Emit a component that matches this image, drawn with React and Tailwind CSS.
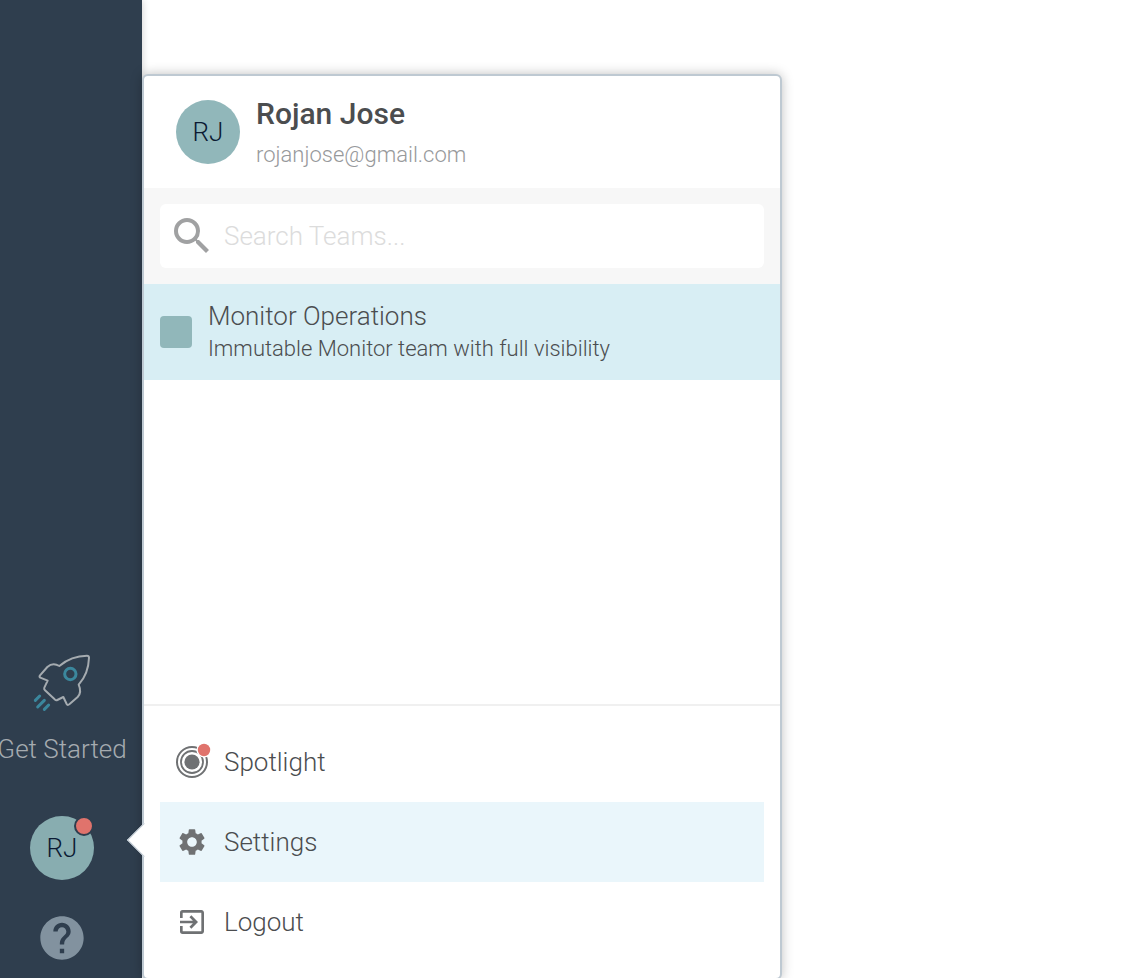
import React from 'react';
import { MdSearch, MdSettings, MdExitToApp, MdHelp } from 'react-icons/md';

function Rocket() {
  return (
    <svg viewBox="90 30 192 192" className="size-16" fill="none" strokeLinecap="round" strokeLinejoin="round" aria-hidden="true">
      <path
        d="M178 78 C200 59 232 47 261 47 Q267 47 267 53 C266 84 254 114 236 134 C243 150 241 163 233 171 L208 193 Q203 197 200 192 L190 171 L172 180 Q168 182 164 178 L135 151 Q131 147 133 143 L143 122 L121 113 Q117 110 120 106 L142 81 C153 71 166 71 178 78 Z"
        stroke="#a5abb0"
        strokeWidth="6"
      />
      <circle cx="211" cy="102" r="17" stroke="#3b879d" strokeWidth="9" />
      <path d="M106 181 L119 168 M113 201 L133 181 M133 208 L146 195" stroke="#3b879d" strokeWidth="9" />
    </svg>
  );
}

function SpotlightIcon() {
  return (
    <svg viewBox="0 0 36 36" className="size-9" fill="none" aria-hidden="true">
      <circle cx="16" cy="20" r="7.6" fill="#6f7173" />
      <circle cx="16" cy="20" r="11" stroke="#6f7173" strokeWidth="1.8" />
      <circle cx="16" cy="20" r="15" stroke="#6f7173" strokeWidth="2" />
      <circle cx="28" cy="8" r="7.6" fill="#fff" />
      <circle cx="28" cy="8" r="6.2" fill="#e0736c" />
    </svg>
  );
}

function Sidebar() {
  return (
    <nav className="flex w-[142px] shrink-0 flex-col items-center justify-end overflow-hidden bg-[#2f3e4e] pr-[18px] pb-[14px] shadow-[0_0_8px_rgba(0,0,0,0.2)]">
      <a href="#start" className="flex flex-col items-center gap-4 text-[26px] leading-[38px] font-light whitespace-nowrap text-[#a5abb0]">
        <Rocket />
        Get Started
      </a>
      <button type="button" className="relative mt-12 flex size-16 items-center justify-center rounded-full bg-[#88adb0] text-[26px] font-light text-[#0b1a33]">
        RJ
        <span className="absolute top-0 right-0 size-5 rounded-full border-2 border-[#2f3e4e] bg-[#e0736c]" />
      </button>
      <button type="button" aria-label="Help" className="mt-8 text-[#82929f]">
        <MdHelp className="size-[52px]" />
      </button>
    </nav>
  );
}

function MenuItem({ icon, label, active }) {
  return (
    <button
      type="button"
      className={`flex h-20 w-full items-center gap-4 pl-4 text-left text-[26px] font-light text-[#4b4d4f] ${active ? 'bg-[#eaf6fb]' : ''}`}
    >
      <span className="flex size-8 shrink-0 items-center text-[#6f7173]">{icon}</span>
      {label}
    </button>
  );
}

function UserMenu() {
  return (
    <section className="relative mt-[74px] flex w-full max-w-[640px] flex-col self-start rounded-md border-2 border-[#bec9d2] bg-white shadow-[0_0_12px_rgba(0,0,0,0.25)]">
      <span className="absolute bottom-[126px] -left-3 size-6 rotate-45 border-b border-l border-[#bec9d2] bg-white" />
      <header className="relative flex items-center gap-4 rounded-t-md bg-white px-8 py-4">
        <div className="flex size-16 shrink-0 items-center justify-center rounded-full bg-[#91b7ba] text-[26px] font-light text-[#0b1a33]">RJ</div>
        <div className="flex h-20 flex-col">
          <h1 className="text-[30px] leading-[44px] font-medium text-[#4b4d4f]">Rojan Jose</h1>
          <p className="text-[22px] leading-[38px] font-light text-[#97999b]">rojanjose@gmail.com</p>
        </div>
      </header>
      <div className="bg-[#f7f7f7] p-4">
        <label className="flex h-16 items-center gap-2 rounded-md bg-white px-2">
          <MdSearch className="size-12 shrink-0 text-[#a0a1a2]" />
          <input
            type="text"
            aria-label="Search Teams"
            placeholder="Search Teams..."
            className="min-w-0 flex-1 bg-transparent text-[26px] font-light text-[#4b4d4f] outline-none placeholder:text-[#dcdcdc]"
          />
        </label>
      </div>
      <div className="h-[422px] border-b-2 border-[#f0f0f0]">
        <button type="button" className="flex h-24 w-full items-center gap-4 bg-[#d8eef4] px-4 text-left font-light text-[#4b4d4f]">
          <span className="size-8 shrink-0 rounded bg-[#91b7ba]" />
          <span className="flex flex-col self-start pt-4">
            <span className="text-[26px] leading-8">Monitor Operations</span>
            <span className="text-[22px] leading-[34px]">Immutable Monitor team with full visibility</span>
          </span>
        </button>
      </div>
      <div className="relative p-4">
        <MenuItem icon={<span className="-mt-1"><SpotlightIcon /></span>} label="Spotlight" />
        <MenuItem icon={<MdSettings className="size-8" />} label="Settings" active />
        <MenuItem icon={<MdExitToApp className="size-8" />} label="Logout" />
      </div>
    </section>
  );
}

export default function App() {
  return (
    <main className="flex h-screen overflow-hidden bg-white font-['Roboto',sans-serif]">
      <Sidebar />
      <UserMenu />
    </main>
  );
}
